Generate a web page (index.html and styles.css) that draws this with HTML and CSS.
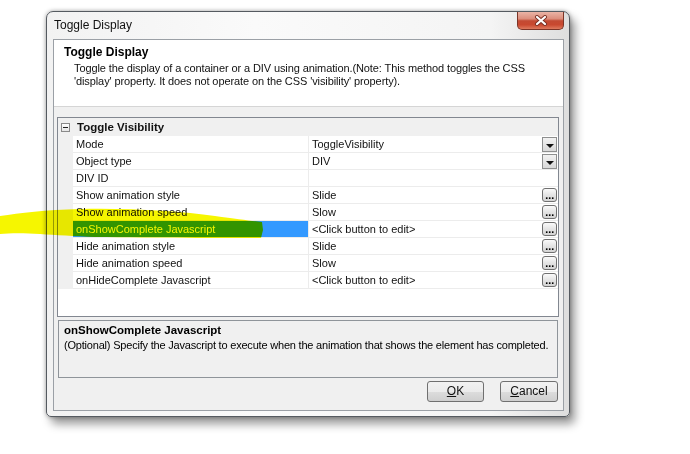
FILE: index.html
```html
<!DOCTYPE html>
<html>
<head>
<meta charset="utf-8">
<title>Toggle Display</title>
<link rel="stylesheet" href="styles.css">
</head>
<body>
<div class="stage">
  <div class="window">
    <div class="titlebar">
      <span class="title">Toggle Display</span>
      <div class="close">
        <svg width="14" height="11" viewBox="0 0 14 11">
          <path d="M3 2 L11 9 M11 2 L3 9" stroke="#7a3024" stroke-width="4" stroke-linecap="round" fill="none"/>
          <path d="M3 2 L11 9 M11 2 L3 9" stroke="#ffffff" stroke-width="2.2" stroke-linecap="round" fill="none"/>
        </svg>
      </div>
    </div>
    <div class="client">
      <div class="header">
        <div class="h-title">Toggle Display</div>
        <div class="h-desc">Toggle the display of a container or a DIV using animation.(Note: This method toggles the CSS<br>'display' property. It does not operate on the CSS 'visibility' property).</div>
      </div>
      <div class="grid">
        <div class="cat"><span class="margin"><span class="minus"></span></span><span class="cat-name">Toggle Visibility</span></div>
        <div class="row"><span class="margin"></span><span class="name">Mode</span><span class="value"><span>ToggleVisibility</span><span class="dd"></span></span></div>
        <div class="row"><span class="margin"></span><span class="name">Object type</span><span class="value"><span>DIV</span><span class="dd"></span></span></div>
        <div class="row"><span class="margin"></span><span class="name">DIV ID</span><span class="value"><span></span></span></div>
        <div class="row"><span class="margin"></span><span class="name">Show animation style</span><span class="value"><span>Slide</span><span class="ell">...</span></span></div>
        <div class="row"><span class="margin"></span><span class="name">Show animation speed</span><span class="value"><span>Slow</span><span class="ell">...</span></span></div>
        <div class="row selected"><span class="margin"></span><span class="name">onShowComplete Javascript</span><span class="value"><span>&lt;Click button to edit&gt;</span><span class="ell">...</span></span></div>
        <div class="row"><span class="margin"></span><span class="name">Hide animation style</span><span class="value"><span>Slide</span><span class="ell">...</span></span></div>
        <div class="row"><span class="margin"></span><span class="name">Hide animation speed</span><span class="value"><span>Slow</span><span class="ell">...</span></span></div>
        <div class="row"><span class="margin"></span><span class="name">onHideComplete Javascript</span><span class="value"><span>&lt;Click button to edit&gt;</span><span class="ell">...</span></span></div>
      </div>
      <div class="help">
        <div class="help-title">onShowComplete Javascript</div>
        <div class="help-text">(Optional) Specify the Javascript to execute when the animation that shows the element has completed.</div>
      </div>
      <div class="buttons">
        <div class="btn ok"><u>O</u>K</div>
        <div class="btn cancel"><u>C</u>ancel</div>
      </div>
    </div>
  </div>
</div>
<svg class="marker" width="690" height="454" viewBox="0 0 690 454">
  <path d="M0 216 C20 213 45 210 80 209 C130 208 180 211 215 216 C238 219 252 221 262 222 L263 230 L261 238 C230 238 160 238 95 237 C75 236 55 235 40 234 C25 233 10 233 0 234 Z" fill="#f6f600"/>
</svg>
</body>
</html>
```

FILE: styles.css
```css
body {
  margin: 0;
  width: 690px;
  height: 454px;
  overflow: hidden;
  position: relative;
  background: #ffffff;
  font-family: "Liberation Sans", Arial, sans-serif;
  color: #000;
}

.stage {
  padding: 11px 0 0 46px;
}

.window {
  width: 524px;
  height: 406px;
  box-sizing: border-box;
  border: 1px solid #555a60;
  border-radius: 7px 7px 5px 5px;
  background: linear-gradient(90deg, #f2f2f2, #fafafa 40%, #f4f4f4 85%, #dedede);
  padding: 0 5px 5px 6px;
  display: flex;
  flex-direction: column;
  box-shadow: 0 0 4px rgba(0, 0, 0, 0.35), 5px 7px 10px rgba(0, 0, 0, 0.4);
}

.titlebar {
  height: 27px;
  flex: none;
  display: flex;
  justify-content: space-between;
  align-items: flex-start;
}

.title {
  padding-left: 1px;
  line-height: 27px;
  font-size: 12px;
  color: #111;
}

.close {
  width: 47px;
  height: 18px;
  box-sizing: border-box;
  border: 1px solid #7b3427;
  border-top: none;
  border-radius: 0 0 5px 5px;
  background: linear-gradient(180deg, #eab4a6 0%, #dc8e7c 40%, #c34a33 52%, #c9482f 75%, #de7a5e 100%);
  display: flex;
  align-items: center;
  justify-content: center;
}

.client {
  flex: 1;
  border: 1px solid #9ba0a6;
  background: #f0f0f0;
  display: flex;
  flex-direction: column;
}

.header {
  height: 67px;
  box-sizing: border-box;
  background: #ffffff;
  border-bottom: 1px solid #d5d5d5;
  padding: 4px 0 0 10px;
}

.h-title {
  font-weight: bold;
  font-size: 12px;
  line-height: 16px;
}

.h-desc {
  padding-left: 10px;
  margin-top: 2px;
  font-size: 11px;
  line-height: 13px;
  letter-spacing: -0.1px;
  color: #111;
}

.grid {
  margin: 10px 4px 0 3px;
  height: 200px;
  box-sizing: border-box;
  border: 1px solid #828790;
  background: #ffffff;
  font-size: 11px;
  color: #111;
}

.cat {
  height: 18px;
  background: #f0f0f0;
  display: flex;
  align-items: center;
}

.cat .margin {
  width: 15px;
  height: 18px;
  display: flex;
  align-items: center;
}

.minus {
  width: 9px;
  height: 9px;
  box-sizing: border-box;
  margin-left: 3px;
  border: 1px solid #8a8a8a;
  background: linear-gradient(180deg, #ffffff, #e6e6e6);
  position: relative;
}

.minus::after {
  content: "";
  position: absolute;
  left: 1px;
  top: 3px;
  width: 5px;
  height: 1px;
  background: #222;
}

.cat-name {
  font-weight: bold;
  font-size: 11.5px;
  padding-left: 4px;
}

.row {
  display: grid;
  grid-template-columns: 15px 236px 1fr;
  height: 17px;
}

.row .margin {
  background: #f0f0f0;
}

.name {
  border-bottom: 1px solid #ececec;
  border-right: 1px solid #ececec;
  padding-left: 3px;
  line-height: 16px;
  white-space: nowrap;
}

.selected .name {
  background: #3399ff;
  color: #ffffff;
}

.value {
  border-bottom: 1px solid #ececec;
  padding-left: 3px;
  line-height: 16px;
  display: flex;
  justify-content: space-between;
  align-items: center;
  white-space: nowrap;
}

.dd {
  width: 15px;
  height: 15px;
  box-sizing: border-box;
  margin-right: 1px;
  border: 1px solid #8e8f8f;
  background: linear-gradient(180deg, #f2f2f2, #d8d8d8);
  position: relative;
}

.dd::after {
  content: "";
  position: absolute;
  left: 3px;
  top: 6px;
  border-left: 4px solid transparent;
  border-right: 4px solid transparent;
  border-top: 4px solid #111;
}

.ell {
  width: 15px;
  height: 14px;
  box-sizing: border-box;
  margin-right: 1px;
  border: 1px solid #707070;
  border-radius: 3px;
  background: linear-gradient(180deg, #fafafa, #e4e4e4 50%, #d4d4d4);
  font-family: "DejaVu Sans", sans-serif;
  font-size: 9px;
  font-weight: bold;
  line-height: 14px;
  text-align: center;
  letter-spacing: -0.5px;
  overflow: hidden;
  color: #000;
}

.help {
  margin: 3px 5px 0 4px;
  height: 58px;
  box-sizing: border-box;
  border: 1px solid #8f949a;
  background: #f0f0f0;
  padding: 2px 0 0 5px;
}

.help-title {
  font-weight: bold;
  font-size: 11.5px;
  line-height: 15px;
}

.help-text {
  font-size: 11px;
  line-height: 15px;
  letter-spacing: -0.2px;
}

.buttons {
  margin-top: 3px;
  display: flex;
  justify-content: flex-end;
  gap: 16px;
  padding-right: 5px;
}

.btn {
  height: 21px;
  box-sizing: border-box;
  border: 1px solid #707070;
  border-radius: 3px;
  background: linear-gradient(180deg, #f2f2f2 0%, #ebebeb 50%, #dddddd 51%, #cfcfcf 100%);
  font-size: 12px;
  line-height: 19px;
  text-align: center;
  color: #111;
}

.ok {
  width: 57px;
}

.cancel {
  width: 58px;
}

.marker {
  position: absolute;
  left: 0;
  top: 0;
  pointer-events: none;
  mix-blend-mode: multiply;
}
```
